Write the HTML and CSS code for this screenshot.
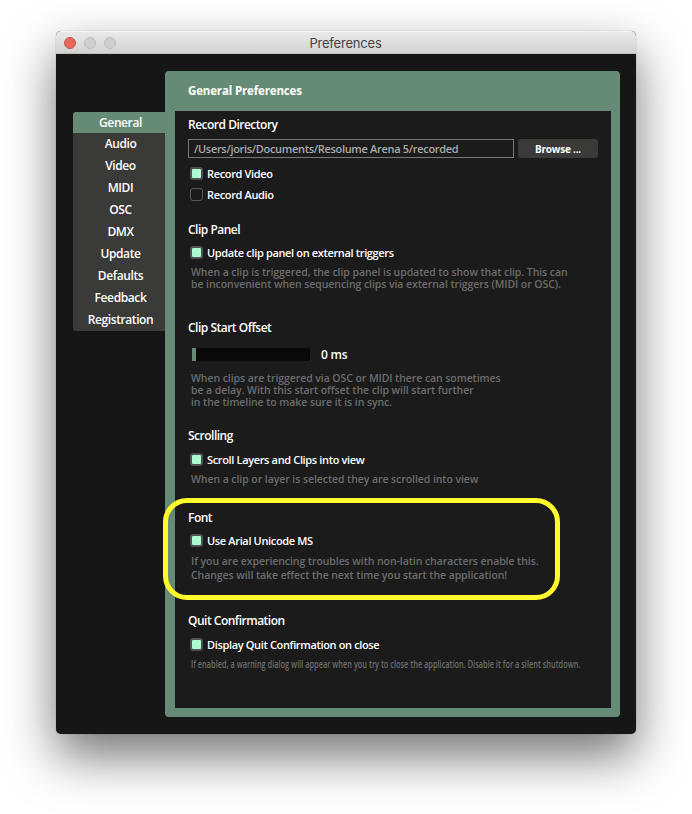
FILE: index.html
```html
<!DOCTYPE html>
<html lang="en">
<head>
    <meta charset="UTF-8">
    <meta name="viewport" content="width=device-width, initial-scale=1.0">
    <title>Preferences</title>
    <link rel="stylesheet" href="styles.css">
</head>

<body>

<div class="window">

    <!-- Title bar -->
    <div class="titlebar">
        <div class="lights">
            <span class="light close"></span>
            <span class="light"></span>
            <span class="light"></span>
        </div>
        <div class="title">Preferences</div>
    </div>

    <div class="main">
        <!-- Tabs -->
        <nav class="sidebar">
            <div class="tab active">General</div>
            <div class="tab">Audio</div>
            <div class="tab">Video</div>
            <div class="tab">MIDI</div>
            <div class="tab">OSC</div>
            <div class="tab">DMX</div>
            <div class="tab">Update</div>
            <div class="tab">Defaults</div>
            <div class="tab">Feedback</div>
            <div class="tab">Registration</div>
        </nav>

        <div class="panel">
            <h1>General Preferences</h1>

            <div class="content">
                <section class="directory">
                    <h2>Record Directory</h2>
                    <div class="field">
                        <div class="path">/Users/joris/Documents/Resolume Arena 5/recorded</div>
                        <button class="btn">Browse ...</button>
                    </div>
                    <div class="check"><span class="checkbox on"></span><span>Record Video</span></div>
                    <div class="check"><span class="checkbox"></span><span>Record Audio</span></div>
                </section>

                <section class="clip-panel">
                    <h2>Clip Panel</h2>
                    <div class="check"><span class="checkbox on"></span><span>Update clip panel on external triggers</span></div>
                    <p class="help">When a clip is triggered, the clip panel is updated to show that clip. This can<br>be inconvenient when sequencing clips via external triggers (MIDI or OSC).</p>
                </section>

                <section class="offset">
                    <h2>Clip Start Offset</h2>
                    <div class="slider-row">
                        <div class="slider"><div class="slider-fill"></div></div>
                        <div class="slider-value">0 ms</div>
                    </div>
                    <p class="help">When clips are triggered via OSC or MIDI there can sometimes<br>be a delay. With this start offset the clip will start further<br>in the timeline to make sure it is in sync.</p>
                </section>

                <section class="scrolling">
                    <h2>Scrolling</h2>
                    <div class="check"><span class="checkbox on"></span><span>Scroll Layers and Clips into view</span></div>
                    <p class="help">When a clip or layer is selected they are scrolled into view</p>
                </section>

                <section class="font">
                    <div class="highlight"></div>
                    <h2>Font</h2>
                    <div class="check"><span class="checkbox on"></span><span>Use Arial Unicode MS</span></div>
                    <p class="help loose">If you are experiencing troubles with non-latin characters enable this.<br>Changes will take effect the next time you start the application!</p>
                </section>

                <section class="quit">
                    <h2>Quit Confirmation</h2>
                    <div class="check"><span class="checkbox on"></span><span>Display Quit Confirmation on close</span></div>
                    <p class="help narrow">If enabled, a warning dialog will appear when you try to close the application. Disable it for a silent shutdown.</p>
                </section>
            </div>
        </div>
    </div>
</div>

</body>
</html>
```
FILE: styles.css
```css
* {
    box-sizing: border-box;
}
body {
    margin: 0;
    padding: 31px 56px 0;
    height: 814px;
    overflow: hidden;
    background: #fff;
    color: #fff;
    font-family: "Open Sans", "Noto Sans", sans-serif;
    font-size: 11px;
    font-weight: 600;
    letter-spacing: -0.35px;
}
.window {
    width: 580px;
    height: 703px;
    border-radius: 5px;
    background: #161616;
    box-shadow: 0 0 1px rgba(0, 0, 0, 0.5), 0 22px 50px rgba(0, 0, 0, 0.55);
}
.titlebar {
    display: grid;
    grid-template-columns: 70px 1fr 70px;
    align-items: center;
    height: 23px;
    border-radius: 5px 5px 0 0;
    border-top: 1px solid #f4f4f4;
    border-bottom: 1px solid #b9c0bb;
    background: linear-gradient(#e9e9e9, #d3d3d3);
}
.lights {
    display: flex;
    gap: 8px;
    padding-left: 8px;
}
.light {
    width: 12px;
    height: 12px;
    border: 1px solid #bababa;
    border-radius: 50%;
    background: #cfcfcf;
}
.close {
    border-color: #cb5948;
    background: #e4695a;
}
.title {
    padding-right: 1px;
    text-align: center;
    color: #444;
    font-family: Inter, sans-serif;
    font-size: 13px;
    font-weight: 400;
    letter-spacing: -0.2px;
}
.main {
    display: flex;
    padding: 17px 16px 0 17px;
}
.sidebar {
    width: 92px;
    height: 219px;
    margin-top: 41px;
    border-radius: 3px 0 0 3px;
    overflow: hidden;
    background: #3a3a38;
}
.tab {
    height: 22px;
    padding-left: 3px;
    line-height: 22px;
    text-align: center;
    font-size: 12px;
    letter-spacing: -0.4px;
}
.active {
    height: 21px;
    background: #658b76;
}
.panel {
    width: 455px;
    height: 646px;
    padding: 0 9px 9px 10px;
    border-radius: 4px;
    background: #658b76;
}
h1 {
    height: 40px;
    margin: 0;
    padding-left: 13px;
    line-height: 40px;
    font-size: 11.5px;
    font-weight: 700;
    letter-spacing: -0.15px;
}
.content {
    height: 597px;
    padding: 4px 13px 0;
    background: #1b1b1b;
}
h2 {
    height: 20px;
    margin: 0;
    line-height: 20px;
    font-size: 12px;
    font-weight: 600;
    letter-spacing: -0.5px;
}
.field {
    display: flex;
    gap: 4px;
    margin: 4px 0 5px;
}
.path {
    width: 326px;
    height: 19px;
    padding-left: 5px;
    border: 1px solid #777;
    line-height: 17px;
    letter-spacing: -0.31px;
    color: #aaa;
    white-space: nowrap;
}
.btn {
    width: 80px;
    height: 19px;
    padding: 0;
    border: none;
    border-radius: 3px;
    background: #3a3a38;
    color: #fff;
    font: 700 10px "Open Sans", sans-serif;
    letter-spacing: -0.2px;
}
.check {
    display: flex;
    align-items: center;
    gap: 4px;
    height: 21px;
    padding-left: 2px;
    white-space: nowrap;
}
.checkbox {
    width: 13px;
    height: 13px;
    border: 1px solid #585858;
    border-radius: 3px;
}
.on {
    border: 2px solid #505050;
    background: #adfad2;
}
.help {
    margin: 3px 0 0 3px;
    line-height: 12px;
    font-size: 10.5px;
    letter-spacing: -0.07px;
    color: #6c6c6c;
    white-space: nowrap;
}
.loose {
    line-height: 14px;
}
/* long line is squeezed to fit the panel */
.narrow {
    width: max-content;
    font-size: 11px;
    letter-spacing: 0;
    transform: scaleX(0.671);
    transform-origin: left;
}
.clip-panel {
    margin-top: 15px;
}
.clip-panel .check,
.font .check {
    margin-top: 2px;
}
.scrolling .check,
.quit .check {
    margin-top: 3px;
}
.offset {
    margin-top: 28px;
}
.scrolling {
    margin-top: 18px;
}
.font {
    position: relative;
    margin-top: 23px;
}
.quit {
    margin-top: 29px;
}
.slider-row {
    display: flex;
    align-items: center;
    gap: 11px;
    height: 13px;
    margin: 10px 0 11px 4px;
    font-size: 12px;
    letter-spacing: -0.2px;
}
.slider {
    width: 118px;
    height: 13px;
    border-radius: 2px;
    background: #090909;
}
.slider-fill {
    width: 4px;
    height: 13px;
    background: #658b76;
}
.highlight {
    position: absolute;
    top: -10px;
    left: -25px;
    width: 397px;
    height: 102px;
    border: 5px solid #fff92e;
    border-radius: 24px;
}
```
